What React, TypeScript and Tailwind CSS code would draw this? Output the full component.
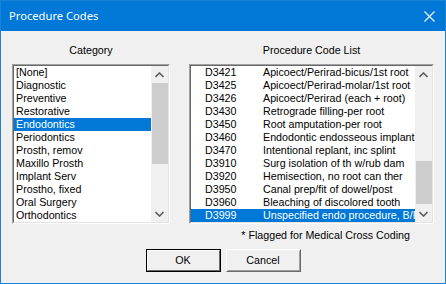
import React from "react";

const categories = [
  "[None]",
  "Diagnostic",
  "Preventive",
  "Restorative",
  "Endodontics",
  "Periodontics",
  "Prosth, remov",
  "Maxillo Prosth",
  "Implant Serv",
  "Prostho, fixed",
  "Oral Surgery",
  "Orthodontics",
];

const codes: [string, string][] = [
  ["D3421", "Apicoect/Perirad-bicus/1st root"],
  ["D3425", "Apicoect/Perirad-molar/1st root"],
  ["D3426", "Apicoect/Perirad (each + root)"],
  ["D3430", "Retrograde filling-per root"],
  ["D3450", "Root amputation-per root"],
  ["D3460", "Endodontic endosseous implant"],
  ["D3470", "Intentional replant, inc splint"],
  ["D3910", "Surg isolation of th w/rub dam"],
  ["D3920", "Hemisection, no root can ther"],
  ["D3950", "Canal prep/fit of dowel/post"],
  ["D3960", "Bleaching of discolored tooth"],
  ["D3999", "Unspecified endo procedure, B/R"],
];

function Chevron({ up }: { up?: boolean }) {
  return (
    <svg width="9" height="6" viewBox="0 0 9 6">
      {up ? (
        <path d="M0.5 5 L4.5 1 L8.5 5" fill="none" stroke="#606060" strokeWidth="1.6" />
      ) : (
        <path d="M0.5 1 L4.5 5 L8.5 1" fill="none" stroke="#606060" strokeWidth="1.6" />
      )}
    </svg>
  );
}

function ScrollBar({ offset, size }: { offset: number; size: number }) {
  return (
    <div className="w-[17px] h-full flex flex-col bg-[#f0f0f0]">
      <div className="h-[17px] flex items-center justify-center">
        <Chevron up />
      </div>
      <div className="flex-1 relative">
        <div
          className="absolute left-[1px] right-0 bg-[#cdcdcd]"
          style={{ top: offset, height: size }}
        />
      </div>
      <div className="h-[17px] flex items-center justify-center">
        <Chevron />
      </div>
    </div>
  );
}

function ListFrame({ children }: { children: React.ReactNode }) {
  return (
    <div className="h-[160px] border border-t-[#a0a0a0] border-l-[#a0a0a0] border-r-white border-b-white">
      <div className="h-full border border-t-[#696969] border-l-[#696969] border-r-[#e3e3e3] border-b-[#e3e3e3] bg-white flex overflow-hidden">
        {children}
      </div>
    </div>
  );
}

export default function App() {
  const font = { fontFamily: '"Liberation Sans", Arial, sans-serif' };
  return (
    <div
      className="w-[446px] h-[284px] border border-[#1883d7] bg-[#f0f0f0] flex flex-col text-[10.7px] text-black overflow-hidden"
      style={font}
    >
      <div className="h-[30px] bg-[#0078d7] flex items-center justify-between pl-[8px] pr-[10px] shrink-0">
        <span
          className="text-white text-[11.2px]"
          style={{ fontFamily: '"Noto Sans", "Open Sans", sans-serif' }}
        >
          Procedure Codes
        </span>
        <svg width="11" height="11" viewBox="0 0 11 11">
          <path d="M0.5 0.5 L10.5 10.5 M10.5 0.5 L0.5 10.5" stroke="white" strokeWidth="1.1" />
        </svg>
      </div>
      <div className="flex-1 flex flex-col pt-[13px]">
        <div className="flex px-[11px] gap-[19px]">
          <div className="w-[158px] flex flex-col">
            <div className="h-[13px] leading-[13px] text-center mb-[7px]">Category</div>
            <ListFrame>
              <div className="flex-1 flex flex-col">
                {categories.map((c, i) => (
                  <div
                    key={c}
                    className={`h-[13px] leading-[13px] pl-[2px] whitespace-nowrap ${
                      i === 4 ? "bg-[#0078d7] text-white" : ""
                    }`}
                  >
                    {c}
                  </div>
                ))}
              </div>
              <ScrollBar offset={0} size={81} />
            </ListFrame>
          </div>
          <div className="w-[245px] flex flex-col">
            <div className="h-[13px] leading-[13px] text-center mb-[7px]">Procedure Code List</div>
            <ListFrame>
              <div className="flex-1 flex flex-col min-w-0">
                {codes.map(([c, d], i) => (
                  <div
                    key={c}
                    className={`h-[13px] leading-[13px] flex whitespace-nowrap overflow-hidden ${
                      i === 11 ? "bg-[#0078d7] text-white" : ""
                    }`}
                  >
                    <span className="w-[72px] pl-[14px] shrink-0">{c}</span>
                    <span>{d}</span>
                  </div>
                ))}
              </div>
              <ScrollBar offset={78} size={43} />
            </ListFrame>
          </div>
        </div>
        <div className="h-[13px] leading-[13px] mt-[5px] flex justify-end pr-[35px]">
          * Flagged for Medical Cross Coding
        </div>
        <div className="flex justify-center gap-[5px] mt-[7px]">
          <div className="w-[75px] h-[23px] border border-black">
            <div className="h-full border border-t-white border-l-white border-r-[#696969] border-b-[#696969] flex items-center justify-center">
              OK
            </div>
          </div>
          <div className="w-[75px] h-[23px] border border-t-white border-l-white border-r-[#696969] border-b-[#696969]">
            <div className="h-full border border-t-[#f0f0f0] border-l-[#f0f0f0] border-r-[#a0a0a0] border-b-[#a0a0a0] flex items-center justify-center">
              Cancel
            </div>
          </div>
        </div>
      </div>
    </div>
  );
}
